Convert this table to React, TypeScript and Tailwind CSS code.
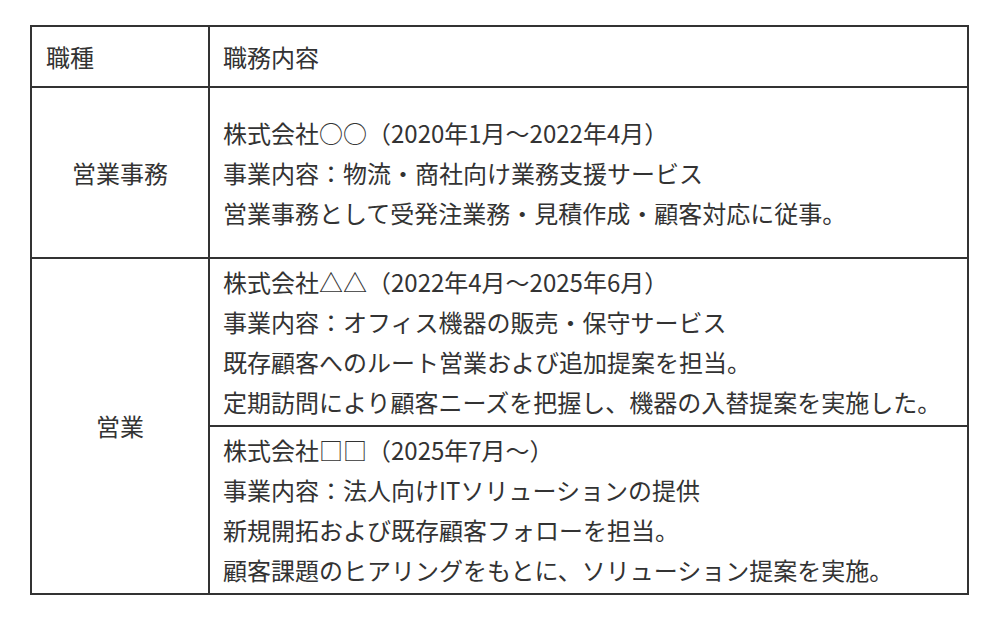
const rows = [
  {
    role: "営業事務",
    blocks: [
      [
        "株式会社○○（2020年1月～2022年4月）",
        "事業内容：物流・商社向け業務支援サービス",
        "営業事務として受発注業務・見積作成・顧客対応に従事。",
      ],
    ],
  },
  {
    role: "営業",
    blocks: [
      [
        "株式会社△△（2022年4月～2025年6月）",
        "事業内容：オフィス機器の販売・保守サービス",
        "既存顧客へのルート営業および追加提案を担当。",
        "定期訪問により顧客ニーズを把握し、機器の入替提案を実施した。",
      ],
      [
        "株式会社□□（2025年7月～）",
        "事業内容：法人向けITソリューションの提供",
        "新規開拓および既存顧客フォローを担当。",
        "顧客課題のヒアリングをもとに、ソリューション提案を実施。",
      ],
    ],
  },
];

export default function App() {
  return (
    <div
      className="min-h-screen bg-white pt-[25px] pl-[30px] text-[#333] text-[24px] [text-spacing-trim:space-all]"
      style={{ fontFamily: '"Noto Sans CJK JP", "Noto Sans", sans-serif' }}
    >
      <div className="w-[939px] border-2 border-[#333]">
        <div className="flex h-[61px] border-b-2 border-[#333]">
          <div className="w-[178px] border-r-2 border-[#333] pl-[14px] flex items-center">
            職種
          </div>
          <div className="flex-1 pl-[13px] flex items-center">職務内容</div>
        </div>

        {rows.map((row, i) => (
          <div
            key={row.role}
            className={`flex ${i === 0 ? "h-[171px] border-b-2 border-[#333]" : ""}`}
          >
            <div className="w-[178px] border-r-2 border-[#333] flex items-center justify-center">
              {row.role}
            </div>
            <div className="flex-1 flex flex-col">
              {row.blocks.map((lines, j) => (
                <div
                  key={j}
                  className={`flex-1 flex flex-col justify-center pl-[13px] py-[3px] ${
                    j < row.blocks.length - 1 ? "border-b-2 border-[#333]" : ""
                  }`}
                >
                  {lines.map((l) => (
                    <div key={l} className="leading-[40px] whitespace-nowrap">
                      {l}
                    </div>
                  ))}
                </div>
              ))}
            </div>
          </div>
        ))}
      </div>
    </div>
  );
}
